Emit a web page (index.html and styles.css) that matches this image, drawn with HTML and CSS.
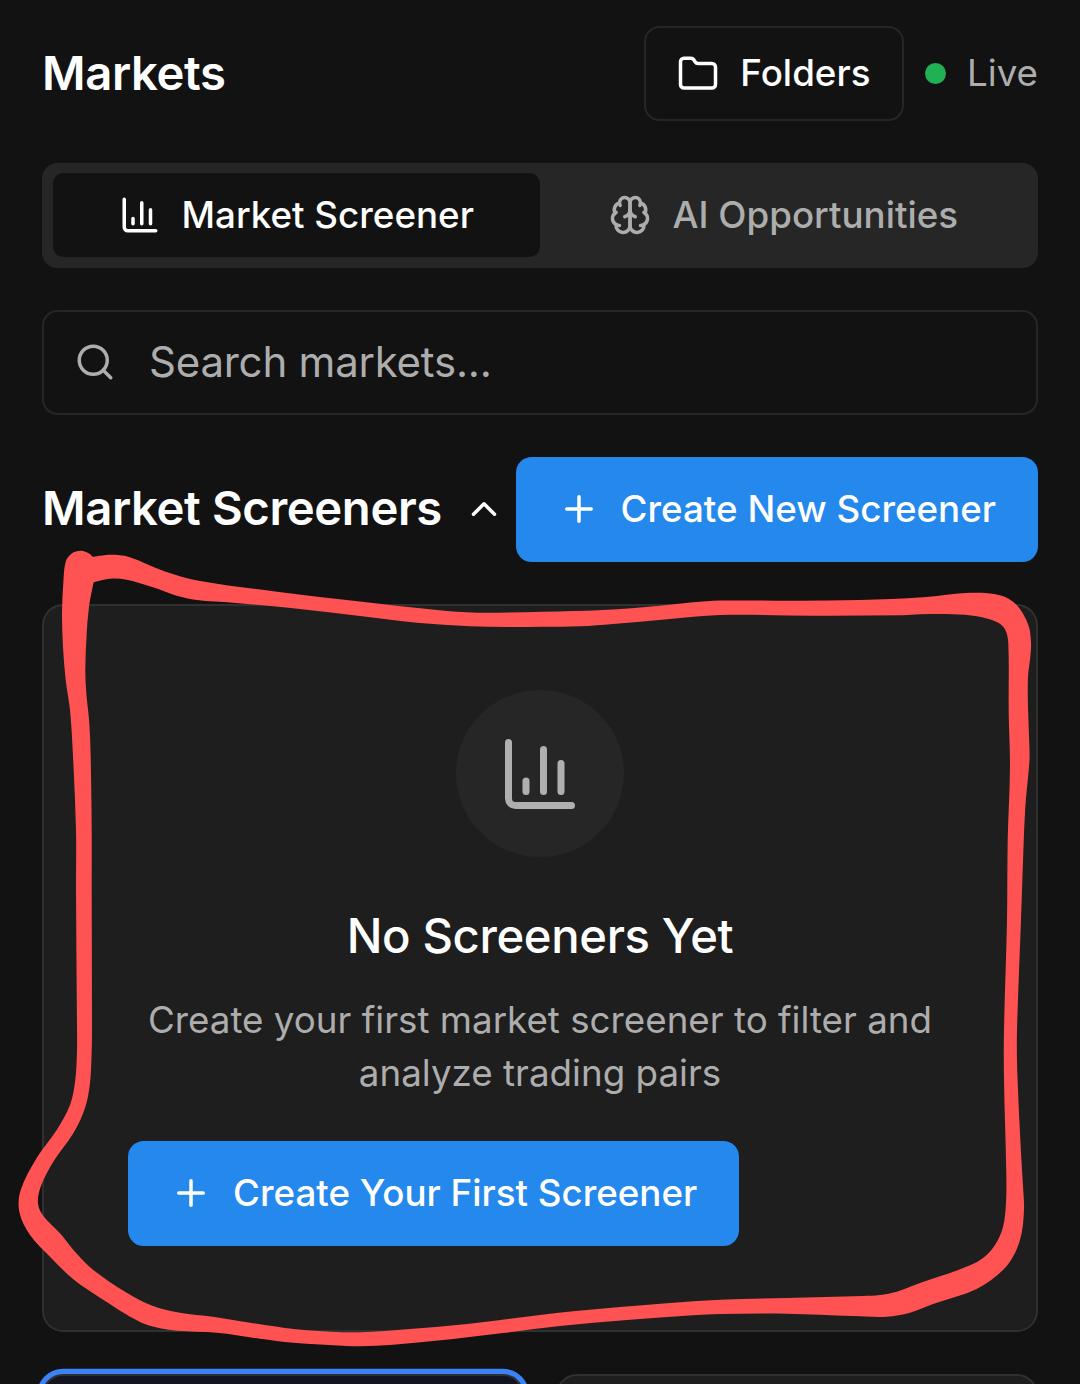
FILE: index.html
```html
<!DOCTYPE html>
<html lang="en">
<head>
<meta charset="utf-8">
<title>Markets</title>
<link rel="stylesheet" href="styles.css">
</head>
<body>
<svg class="sprite" aria-hidden="true">
  <symbol id="chart" viewBox="0 0 24 24"><path d="M3 3v16a2 2 0 0 0 2 2h16"/><path d="M18 17V9"/><path d="M13 17V5"/><path d="M8 17v-3"/></symbol>
  <symbol id="plus" viewBox="0 0 24 24"><path d="M5 12h14"/><path d="M12 5v14"/></symbol>
</svg>
<main class="page">
  <header class="header">
    <h1 class="heading">Markets</h1>
    <div class="header-actions">
      <button class="folders">
        <svg class="icon" viewBox="0 0 24 24"><path d="M20 20a2 2 0 0 0 2-2V8a2 2 0 0 0-2-2h-7.9a2 2 0 0 1-1.69-.9L9.6 3.9A2 2 0 0 0 7.93 3H4a2 2 0 0 0-2 2v13a2 2 0 0 0 2 2Z"/></svg>
        <span>Folders</span>
      </button>
      <div class="status"><i class="dot"></i><span>Live</span></div>
    </div>
  </header>

  <nav class="tabs">
    <button class="tab tab-active">
      <svg class="icon"><use href="#chart"/></svg>
      <span>Market Screener</span>
    </button>
    <button class="tab">
      <svg class="icon" viewBox="0 0 24 24"><path d="M12 5a3 3 0 1 0-5.997.125 4 4 0 0 0-2.526 5.77 4 4 0 0 0 .556 6.588A4 4 0 1 0 12 18Z"/><path d="M12 5a3 3 0 1 1 5.997.125 4 4 0 0 1 2.526 5.77 4 4 0 0 1-.556 6.588A4 4 0 1 1 12 18Z"/><path d="M15 13a4.5 4.5 0 0 1-3-4 4.5 4.5 0 0 1-3 4"/><path d="M17.599 6.5a3 3 0 0 0 .399-1.375"/><path d="M6.003 5.125A3 3 0 0 0 6.401 6.5"/><path d="M3.477 10.896a4 4 0 0 1 .585-.396"/><path d="M19.938 10.5a4 4 0 0 1 .585.396"/><path d="M6 18a4 4 0 0 1-1.967-.516"/><path d="M19.967 17.484A4 4 0 0 1 18 18"/></svg>
      <span>AI Opportunities</span>
    </button>
  </nav>

  <div class="search">
    <svg class="icon" viewBox="0 0 24 24"><circle cx="11" cy="11" r="8"/><path d="m21 21-4.3-4.3"/></svg>
    <span>Search markets...</span>
  </div>

  <div class="section-bar">
    <h2 class="heading">Market Screeners</h2>
    <svg class="icon chevron" viewBox="0 0 24 24"><path d="m18 15-6-6-6 6"/></svg>
    <button class="primary">
      <svg class="icon"><use href="#plus"/></svg>
      <span>Create New Screener</span>
    </button>
  </div>

  <section class="card empty">
    <div class="empty-icon"><svg class="icon icon-lg"><use href="#chart"/></svg></div>
    <h3 class="empty-title">No Screeners Yet</h3>
    <p class="empty-text">Create your first market screener to filter and analyze trading pairs</p>
    <button class="primary">
      <svg class="icon"><use href="#plus"/></svg>
      <span>Create Your First Screener</span>
    </button>
  </section>

  <div class="tiles">
    <div class="card tile tile-selected"></div>
    <div class="card tile"></div>
  </div>

  <svg class="marker" viewBox="0 0 1080 1384"><path id="marker-path" fill-rule="evenodd"/></svg>
</main>
<script src="marker.js"></script>
</body>
</html>
```
FILE: styles.css
```css
* { box-sizing: border-box; margin: 0; padding: 0; }
body {
  background: #121212;
  color: #fff;
  font-family: Inter, "Liberation Sans", sans-serif;
  font-size: 36.75px;
  line-height: 52.5px;
  height: 1384px;
  overflow: hidden;
}
button { font: inherit; font-weight: 500; color: inherit; background: none; border: 0; }
.sprite { position: absolute; width: 0; height: 0; }
.page {
  position: relative;
  display: flex;
  flex-direction: column;
  gap: 42px;
  height: 1384px;
  padding: 26.25px 42px 0;
  overflow: hidden;
}
.page > * { flex-shrink: 0; }
.icon {
  width: 42px;
  height: 42px;
  flex: none;
  fill: none;
  stroke: currentColor;
  stroke-width: 2;
  stroke-linecap: round;
  stroke-linejoin: round;
}
.icon-lg { width: 84px; height: 84px; }
.heading {
  font-size: 47.25px;
  line-height: 73.5px;
  font-weight: 600;
  letter-spacing: -0.38px;
  white-space: nowrap;
  padding-bottom: 2px;
}

.header { display: flex; align-items: center; justify-content: space-between; height: 94.5px; }
.header-actions { display: flex; align-items: center; gap: 21px; }
.folders {
  display: flex;
  align-items: center;
  gap: 21px;
  height: 94.5px;
  padding: 0 31.5px;
  border: 2px solid #262626;
  border-radius: 15.75px;
}
.status { display: flex; align-items: center; gap: 21px; color: #adadad; }
.dot { width: 21px; height: 21px; border-radius: 50%; background: #22b055; }

.tabs {
  display: grid;
  grid-template-columns: 1fr 1fr;
  height: 105px;
  padding: 10.5px;
  border-radius: 15.75px;
  background: #262626;
}
.tab {
  display: flex;
  align-items: center;
  justify-content: center;
  gap: 21px;
  border-radius: 10.5px;
  color: #adadad;
}
.tab-active { background: #121212; color: #fff; }

.search {
  display: flex;
  align-items: center;
  gap: 33.5px;
  height: 105px;
  padding: 0 29.5px;
  border: 2px solid #262626;
  border-radius: 15.75px;
  color: #adadad;
  font-size: 42px;
  letter-spacing: -0.23px;
}

.section-bar { display: flex; align-items: center; height: 105px; }
.section-bar .heading { padding-bottom: 3px; }
.chevron { margin-left: 21px; }
.section-bar .primary { margin-left: auto; }
.primary {
  display: flex;
  align-items: center;
  gap: 21px;
  height: 105px;
  padding: 0 42px;
  border-radius: 15.75px;
  background: #2488ec;
  white-space: nowrap;
}

.card { background: #1e1e1e; border: 2px solid #303030; border-radius: 21px; }
.empty { display: flex; flex-direction: column; height: 727.5px; margin-top: 0.35px; padding: 84px; }
.empty-icon {
  display: flex;
  align-items: center;
  justify-content: center;
  align-self: center;
  width: 168px;
  height: 168px;
  margin-bottom: 42px;
  border-radius: 50%;
  background: #262626;
  color: #afafaf;
}
.empty-icon .icon { margin-top: 1px; }
.empty-title {
  font-size: 47.25px;
  line-height: 73.5px;
  font-weight: 500;
  letter-spacing: -0.38px;
  text-align: center;
  margin-bottom: 20px;
}
.empty-text { color: #adadad; line-height: 53px; text-align: center; margin-bottom: 42px; }
.empty .primary { align-self: flex-start; }

.tiles { display: grid; grid-template-columns: 1fr 1fr; gap: 31.5px; }
.tile { height: 200px; }
.tile-selected { background: #131620; box-shadow: 0 0 0 5.25px #3b82f6; }

.marker { position: absolute; left: 0; top: 0; width: 1080px; height: 1384px; fill: #ff5353; pointer-events: none; }
```
FILE: marker.js
```js
// Outer and inner edges of the hand-drawn marker loop, as x,y pairs.
const outer = [93,557, 111,554.8, 129,557, 165,571.5, 200,581, 275,591.5, 360,601.5, 437,610, 477,612.7, 543,611.7, 603,610, 660,605.7, 693,602.3, 720,600.5, 797,600.7, 860,600, 923,597.3, 970,592.8, 1000,595.3, 1016.7,605, 1028.3,625, 1031,643, 1030.3,656.7, 1028,677, 1028,707, 1029.5,750, 1029.3,763, 1025.3,807, 1023.3,853, 1021,920, 1017,1030, 1017.3,1073, 1021,1153, 1023.7,1197, 1024,1210, 1021.7,1233, 1015,1253, 1003,1270, 976.7,1289, 933,1304, 910,1312.7, 886.7,1316.7, 853,1316, 787,1313.7, 720,1314, 693,1315.3, 627,1320, 560,1326, 503,1333, 453,1339, 393,1344.7, 360,1346.3, 347,1346, 293,1342.7, 260,1338.7, 217,1332.7, 177,1330.7, 160,1328.3, 140,1322, 100,1297.7, 73.3,1279.3, 50,1256.7, 30,1235, 19.3,1211.7, 20.7,1190, 36.7,1158, 56.7,1130, 70,1105, 75.3,1080, 77,1050, 77,1030, 76,890, 76,830, 72.7,750, 70,710, 65.7,680, 63,647, 62,613, 63.3,583, 65.7,561.7, 71.7,553.5, 80.7,550.7, 88.3,553];
const inner = [93.7,582.3, 110,578.7, 126.7,579.7, 153,587.3, 176.7,595.7, 196.7,600, 233,602.7, 293,608.3, 360,616, 417,622.7, 470,626.3, 507,627, 580,626.3, 613,624, 667,619.3, 720,615, 813,615.7, 903,615.3, 920,614.3, 953,614.3, 977,616.3, 996.7,622, 1005,629.3, 1008.3,643.3, 1008.7,713.3, 1010,767, 1007.7,840, 1007,920, 1004,1030, 1004,1080, 1006.3,1173, 1006,1203, 1003,1227, 995,1245, 981.7,1259, 960,1269.3, 920,1283, 896.7,1291.7, 880,1295, 863,1296, 787,1298, 720,1299.7, 667,1303.3, 573,1311.3, 540,1315, 467,1324, 410,1329, 360,1332.3, 307,1330.3, 263,1324.7, 213,1316.7, 180,1312.7, 153,1306, 126.7,1292.7, 93.3,1270, 75,1251.7, 60,1233.3, 43.3,1216, 38,1203.3, 40.7,1186.7, 53.3,1161.7, 73.3,1133.3, 85,1108, 90,1083, 91.7,1050, 92,1030, 91.7,890, 91.7,830, 90.7,757, 89.3,723, 86.3,693, 85.3,670, 86.7,633, 89,607];

// Closed outline through the points; the first point stays a sharp corner.
function outline(flat) {
  const p = [];
  for (let i = 0; i < flat.length; i += 2) p.push([flat[i], flat[i + 1]]);
  const n = p.length;
  const at = i => p[(i + n) % n];
  const handle = (i, toward) => {
    const k = (i + n) % n, a = at(k), b = at(toward);
    if (k === 0) return a;
    const s = at(k - 1), e = at(k + 1);
    const t = [e[0] - s[0], e[1] - s[1]];
    const len = Math.hypot(t[0], t[1]);
    const d = Math.hypot(b[0] - a[0], b[1] - a[1]) / 3;
    const sign = toward > i ? 1 : -1;
    return [a[0] + sign * t[0] / len * d, a[1] + sign * t[1] / len * d];
  };
  let d = "M" + p[0];
  for (let i = 0; i < n; i++) d += "C" + handle(i, i + 1) + " " + handle(i + 1, i) + " " + at(i + 1);
  return d + "Z";
}
document.getElementById("marker-path").setAttribute("d", outline(outer) + outline(inner));
```
